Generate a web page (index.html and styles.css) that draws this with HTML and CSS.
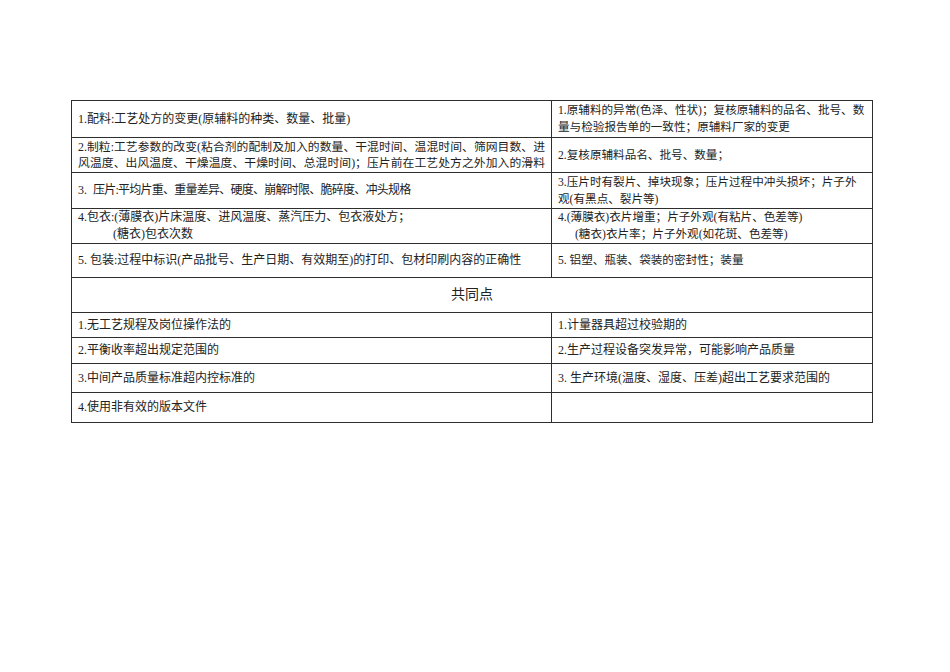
FILE: index.html
```html
<!DOCTYPE html>
<html lang="zh-CN">
<head>
<meta charset="utf-8">
<title>工艺偏差</title>
<link rel="stylesheet" href="styles.css">
</head>
<body>
<div class="page">
  <table class="grid">
    <colgroup><col class="c-left"><col class="c-right"></colgroup>
    <tbody>
      <tr class="r1">
        <td>1.配料:工艺处方的变更(原辅料的种类、数量、批量)</td>
        <td class="rt">1.原辅料的异常(色泽、性状)；复核原辅料的品名、批号、数<br>量与检验报告单的一致性；原辅料厂家的变更</td>
      </tr>
      <tr class="r2">
        <td class="tight"><span class="jline">2.制粒:工艺参数的改变(粘合剂的配制及加入的数量、干混时间、温混时间、筛网目数、进</span><span class="jline">风温度、出风温度、干燥温度、干燥时间、总混时间)；压片前在工艺处方之外加入的滑料</span></td>
        <td class="rt">2.复核原辅料品名、批号、数量；</td>
      </tr>
      <tr class="r3">
        <td>3.&nbsp; <span class="narrow">压片:平均片重、重量差异、硬度、崩解时限、脆碎度、冲头规格</span></td>
        <td class="rt">3.压片时有裂片、掉块现象；压片过程中冲头损坏；片子外<br>观(有黑点、裂片等)</td>
      </tr>
      <tr class="r4">
        <td>4.包衣:(薄膜衣)片床温度、进风温度、蒸汽压力、包衣液处方；<br><span class="ind-l">(糖衣)包衣次数</span></td>
        <td class="rt">4.(薄膜衣)衣片增重；片子外观(有粘片、色差等)<br><span class="ind-r">(糖衣)衣片率；片子外观(如花斑、色差等)</span></td>
      </tr>
      <tr class="r5">
        <td>5. 包装:过程中标识(产品批号、生产日期、有效期至)的打印、包材印刷内容的正确性</td>
        <td class="rt">5. 铝塑、瓶装、袋装的密封性；装量</td>
      </tr>
      <tr class="r6">
        <td colspan="2" class="head">共同点</td>
      </tr>
      <tr class="r7">
        <td>1.无工艺规程及岗位操作法的</td>
        <td>1.计量器具超过校验期的</td>
      </tr>
      <tr class="r8">
        <td>2.平衡收率超出规定范围的</td>
        <td>2.生产过程设备突发异常，可能影响产品质量</td>
      </tr>
      <tr class="r9">
        <td>3.中间产品质量标准超内控标准的</td>
        <td>3. 生产环境(温度、湿度、压差)超出工艺要求范围的</td>
      </tr>
      <tr class="r10">
        <td>4.使用非有效的版本文件</td>
        <td></td>
      </tr>
    </tbody>
  </table>
</div>
</body>
</html>
```

FILE: styles.css
```css
html, body {
  margin: 0;
  padding: 0;
  background: #ffffff;
}

body {
  font-family: "Liberation Serif", "Noto Sans CJK SC", serif;
  color: #222222;
}

.page {
  padding: 100px 0 0 71px;
}

.grid {
  border-collapse: collapse;
  width: 801px;
  table-layout: fixed;
}

.c-left { width: 480px; }
.c-right { width: 321px; }

.grid td {
  border: 1px solid #2e2e2e;
  padding: 0 6px 0 6px;
  font-size: 12px;
  line-height: 17px;
  vertical-align: middle;
  white-space: nowrap;
  overflow: hidden;
}

.grid td.rt {
  font-size: 11.6px;
}

.grid td.tight {
  line-height: 16px;
  font-size: 11.8px;
}

.jline {
  display: block;
  text-align: justify;
  text-align-last: justify;
}

.narrow {
  letter-spacing: -0.75px;
}

.ind-l {
  padding-left: 35px;
}

.ind-r {
  padding-left: 17px;
}

.grid td.head {
  text-align: center;
  font-size: 14px;
  line-height: 20px;
}

.r1 { height: 37px; }
.r2 { height: 35px; }
.r3 { height: 36px; }
.r4 { height: 34px; }
.r5 { height: 34px; }
.r6 { height: 35px; }
.r7 { height: 25px; }
.r8 { height: 26px; }
.r9 { height: 29px; }
.r10 { height: 30px; }
```
